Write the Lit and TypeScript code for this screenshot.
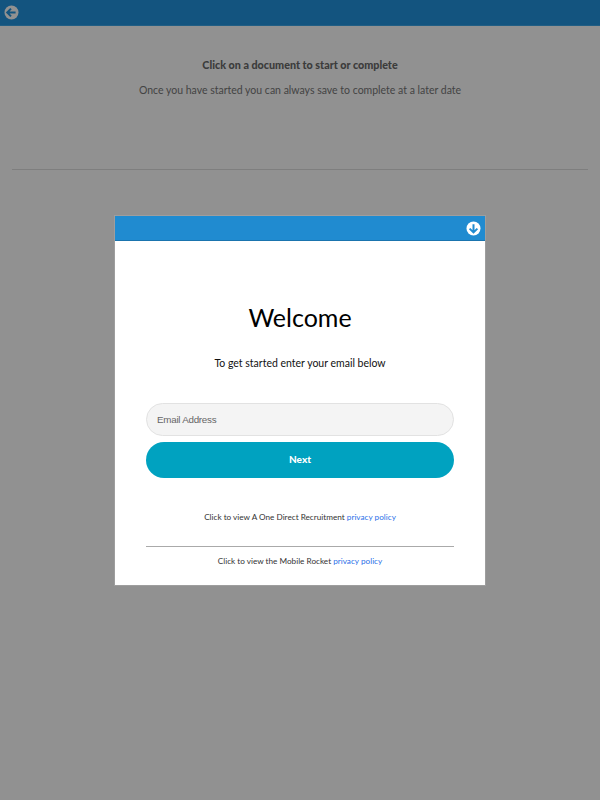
import { LitElement, html, css } from "lit";
import { customElement } from "lit/decorators.js";

@customElement("app-root")
export class AppRoot extends LitElement {
  static styles = css`
    :host { display: block; position: relative; width: 600px; height: 800px; overflow: hidden; background: #fff; font-family: Lato, "Liberation Sans", sans-serif; color: #000; }
    .topbar { height: 25px; background: #2395df; border-bottom: 1px solid #3aa5e8; display: flex; align-items: center; padding-left: 4px; }
    .topbar svg { display: block; }
    .intro { display: flex; flex-direction: column; align-items: center; padding-top: 31px; font-size: 10.5px; color: #777; }
    .intro b { font-weight: 900; font-size: 10.75px; line-height: 16px; color: #6a6a6a; }
    .intro p { margin: 9px 0 0; line-height: 16px; }
    .rule { margin: 71px 12px 0; border: 0; border-top: 1px solid #ddd; }
    .overlay { position: absolute; inset: 0; background: rgba(0,0,0,0.43); display: flex; justify-content: center; align-items: flex-start; padding-top: 216px; box-sizing: border-box; }
    .modal { width: 370px; height: 368.5px; background: #fff; display: flex; flex-direction: column; box-shadow: 0 0 0 1px rgba(255,255,255,0.12); }
    .mhead { height: 24px; background: #208bd0; border-bottom: 1px solid #1a74ae; display: flex; justify-content: flex-end; align-items: center; padding-right: 4px; flex: none; }
    .mbody { padding: 0 31px; display: flex; flex-direction: column; flex: 1; }
    h1 { margin: 60px 0 0; font-size: 25px; font-weight: 400; line-height: 32px; text-align: center; color: #000; }
    .sub { margin: 22px 0 0; font-size: 10.5px; line-height: 16px; text-align: center; color: #111; }
    .email { margin-top: 32px; height: 33px; box-sizing: border-box; border: 1px solid #e2e2e2; border-radius: 17px; background: #f4f4f4; padding-left: 10px; font: 9.8px/32px "Liberation Sans", sans-serif; letter-spacing: -0.25px; color: #666; }
    .next { margin-top: 6px; height: 36px; border-radius: 18px; background: #00a2c0; color: #fff; font-size: 10px; font-weight: 900; text-align: center; line-height: 35px; }
    .policy { font-size: 8.2px; line-height: 12px; text-align: center; color: #333; }
    .policy a { color: #2a6fe8; text-decoration: none; }
    .first { margin-top: 33px; }
    .divider { margin: 23px 0 0; border: 0; border-top: 1px solid #aaa; }
    .second { margin-top: 8px; }
  `;

  render() {
    return html`
      <div class="topbar">
        <svg width="15" height="15" viewBox="0 0 15 15">
          <circle cx="7.5" cy="7.5" r="7" fill="#fff"></circle>
          <path d="M3.2 7.5H11.6M7 3.6 3.2 7.5 7 11.4" fill="none" stroke="#2395df" stroke-width="2"></path>
        </svg>
      </div>
      <div class="intro">
        <b>Click on a document to start or complete</b>
        <p>Once you have started you can always save to complete at a later date</p>
      </div>
      <hr class="rule" />
      <div class="overlay">
        <div class="modal">
          <div class="mhead">
            <svg width="15" height="15" viewBox="0 0 15 15">
              <circle cx="7.5" cy="7.5" r="7" fill="#fff"></circle>
              <path d="M7.5 3.2V11.6M3.6 7.6 7.5 11.4 11.4 7.6" fill="none" stroke="#208bd0" stroke-width="2"></path>
            </svg>
          </div>
          <div class="mbody">
            <h1>Welcome</h1>
            <p class="sub">To get started enter your email below</p>
            <div class="email">Email Address</div>
            <div class="next">Next</div>
            <div class="policy first">Click to view A One Direct Recruitment <a href="#">privacy policy</a></div>
            <hr class="divider" />
            <div class="policy second">Click to view the Mobile Rocket <a href="#">privacy policy</a></div>
          </div>
        </div>
      </div>
    `;
  }
}
